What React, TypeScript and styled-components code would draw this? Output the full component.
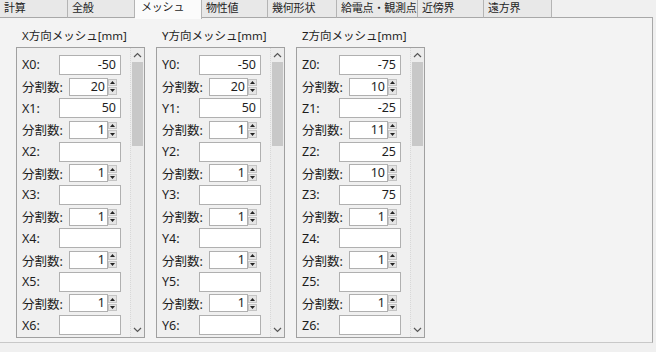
import React from 'react'
import styled, { createGlobalStyle } from 'styled-components'

const GlobalStyle = createGlobalStyle`
  html, body {
    margin: 0;
    padding: 0;
    background: #f0f0f0;
  }
  body {
    font-family: "Noto Sans", "Noto Sans CJK JP", sans-serif;
    font-size: 12px;
    color: #1e1e1e;
  }
`

const tabs = [
  { name: '計算', w: 68 },
  { name: '全般', w: 67 },
  { name: 'メッシュ', w: 67, active: true },
  { name: '物性値', w: 66 },
  { name: '幾何形状', w: 69 },
  { name: '給電点・観測点', w: 81 },
  { name: '近傍界', w: 66 },
  { name: '遠方界', w: 68 },
]

type Item = { label: string; value: string; spin?: boolean }

const build = (axis: string, coords: string[], divs: string[]): Item[] => {
  const out: Item[] = []
  coords.forEach((c, i) => {
    out.push({ label: `${axis}${i}:`, value: c })
    if (i < divs.length) out.push({ label: '分割数:', value: divs[i], spin: true })
  })
  return out
}

// only the rows that fit in the list box are drawn (X0 .. X6)
const groups = [
  { title: 'X方向メッシュ[mm]', items: build('X', ['-50', '50', '', '', '', '', ''], ['20', '1', '1', '1', '1', '1']) },
  { title: 'Y方向メッシュ[mm]', items: build('Y', ['-50', '50', '', '', '', '', ''], ['20', '1', '1', '1', '1', '1']) },
  { title: 'Z方向メッシュ[mm]', items: build('Z', ['-75', '-25', '25', '75', '', '', ''], ['10', '11', '10', '1', '1', '1']) },
]

const App = () => {
  return (
    <Page>
      <GlobalStyle />
      <TabBar>
        {tabs.map((t) => (
          <Tab key={t.name} $w={t.w} $active={!!t.active}>{t.name}</Tab>
        ))}
        <TabRest />
      </TabBar>
      <Panel>
        <Groups>
          {groups.map((g) => (
            <Group key={g.title}>
              <Title>{g.title}</Title>
              <ListBox>
                <Rows>
                  {g.items.map((it, i) => (
                    <Row key={i}>
                      <Label>{it.label}</Label>
                      {it.spin ? (
                        <Spin>
                          <SpinText>{it.value}</SpinText>
                          <SpinButtons>
                            <SpinBtn><svg width="5" height="3" viewBox="0 0 5 3"><path d="M0 3 L2.5 0 L5 3 Z" fill="#222" /></svg></SpinBtn>
                            <SpinBtn><svg width="5" height="3" viewBox="0 0 5 3"><path d="M0 0 L2.5 3 L5 0 Z" fill="#222" /></svg></SpinBtn>
                          </SpinButtons>
                        </Spin>
                      ) : (
                        <CoordBox>{it.value}</CoordBox>
                      )}
                    </Row>
                  ))}
                </Rows>
                <ScrollBar>
                  <Arrow>
                    <svg width="9" height="6" viewBox="0 0 9 6"><path d="M1 5 L4.5 1.5 L8 5" stroke="#555" strokeWidth="1.2" fill="none" /></svg>
                  </Arrow>
                  <Thumb />
                  <Track />
                  <Arrow>
                    <svg width="9" height="6" viewBox="0 0 9 6"><path d="M1 1 L4.5 4.5 L8 1" stroke="#555" strokeWidth="1.2" fill="none" /></svg>
                  </Arrow>
                </ScrollBar>
              </ListBox>
            </Group>
          ))}
        </Groups>
      </Panel>
    </Page>
  )
}

export default App

const Page = styled.div`
  width: 656px;
  height: 352px;
  overflow: hidden;
  background: #f0f0f0;
`
const TabBar = styled.div`
  display: flex;
  height: 18px;
`
const Tab = styled.div<{ $w: number; $active: boolean }>`
  width: ${(p) => p.$w}px;
  box-sizing: border-box;
  height: ${(p) => (p.$active ? 19 : 18)}px;
  padding-left: ${(p) => (p.$active ? 6 : 4)}px;
  line-height: ${(p) => (p.$active ? 13 : 16)}px;
  background: ${(p) => (p.$active ? '#fbfbfb' : '#e8e8e8')};
  border-right: 1px solid #b4b4b4;
  border-bottom: ${(p) => (p.$active ? 'none' : '1px solid #a8a8a8')};
  font-size: 11px;
  letter-spacing: -0.2px;
  color: #1e1e1e;
  white-space: nowrap;
  position: relative;
  z-index: 1;
`
const TabRest = styled.div`
  flex: 1;
  height: 18px;
  box-sizing: border-box;
  border-bottom: 1px solid #a8a8a8;
  margin-right: 3px;
`
const Panel = styled.div`
  width: 653px;
  height: 325px;
  box-sizing: border-box;
  border-right: 1px solid #a8a8a8;
  border-bottom: 1px solid #c8c8c8;
  background: #f3f3f3;
  padding: 10px 0 0 16px;
`
const Groups = styled.div`
  display: flex;
  gap: 11px;
`
const Group = styled.div`
  width: 129px;
  display: flex;
  flex-direction: column;
`
const Title = styled.div`
  height: 16px;
  line-height: 16px;
  padding-left: 6px;
  font-size: 11.5px;
  margin-bottom: 3px;
  white-space: nowrap;
`
const ListBox = styled.div`
  height: 291px;
  box-sizing: border-box;
  border: 1px solid #a0a0a0;
  display: flex;
  overflow: hidden;
  background: #f0f0f0;
`
const Rows = styled.div`
  flex: 1;
  padding: 6px 0 0 5px;
  display: flex;
  flex-direction: column;
  overflow: hidden;
`
const Row = styled.div`
  height: 21.7px;
  flex-shrink: 0;
  display: flex;
  align-items: center;
`
const Label = styled.div`
  width: 37px;
  flex-shrink: 0;
  white-space: nowrap;
  font-size: 12.5px;
`
const CoordBox = styled.div`
  width: 62px;
  height: 20px;
  box-sizing: border-box;
  border: 1px solid #b0b0b0;
  background: #fff;
  text-align: right;
  padding-right: 4px;
  line-height: 18px;
  font-size: 12.5px;
`
const Spin = styled.div`
  display: flex;
  margin-left: 10px;
  height: 18px;
`
const SpinText = styled.div`
  width: 39px;
  box-sizing: border-box;
  border: 1px solid #b0b0b0;
  background: #fff;
  text-align: right;
  padding-right: 2px;
  line-height: 16px;
  font-size: 12.5px;
`
const SpinButtons = styled.div`
  width: 9px;
  display: flex;
  flex-direction: column;
  padding: 1px 0;
  box-sizing: border-box;
  gap: 1px;
`
const SpinBtn = styled.div`
  flex: 1;
  background: #e4e4e4;
  border: 1px solid #c4c4c4;
  display: flex;
  align-items: center;
  justify-content: center;
`
const ScrollBar = styled.div`
  width: 13px;
  flex-shrink: 0;
  display: flex;
  flex-direction: column;
  border-left: 1px dotted #d8d8d8;
  background: #ececec;
`
const Arrow = styled.div`
  height: 14px;
  flex-shrink: 0;
  display: flex;
  align-items: center;
  justify-content: center;
`
const Thumb = styled.div`
  height: 84px;
  margin: 0 1px;
  background: #c8c8c8;
  flex-shrink: 0;
`
const Track = styled.div`
  flex: 1;
`
